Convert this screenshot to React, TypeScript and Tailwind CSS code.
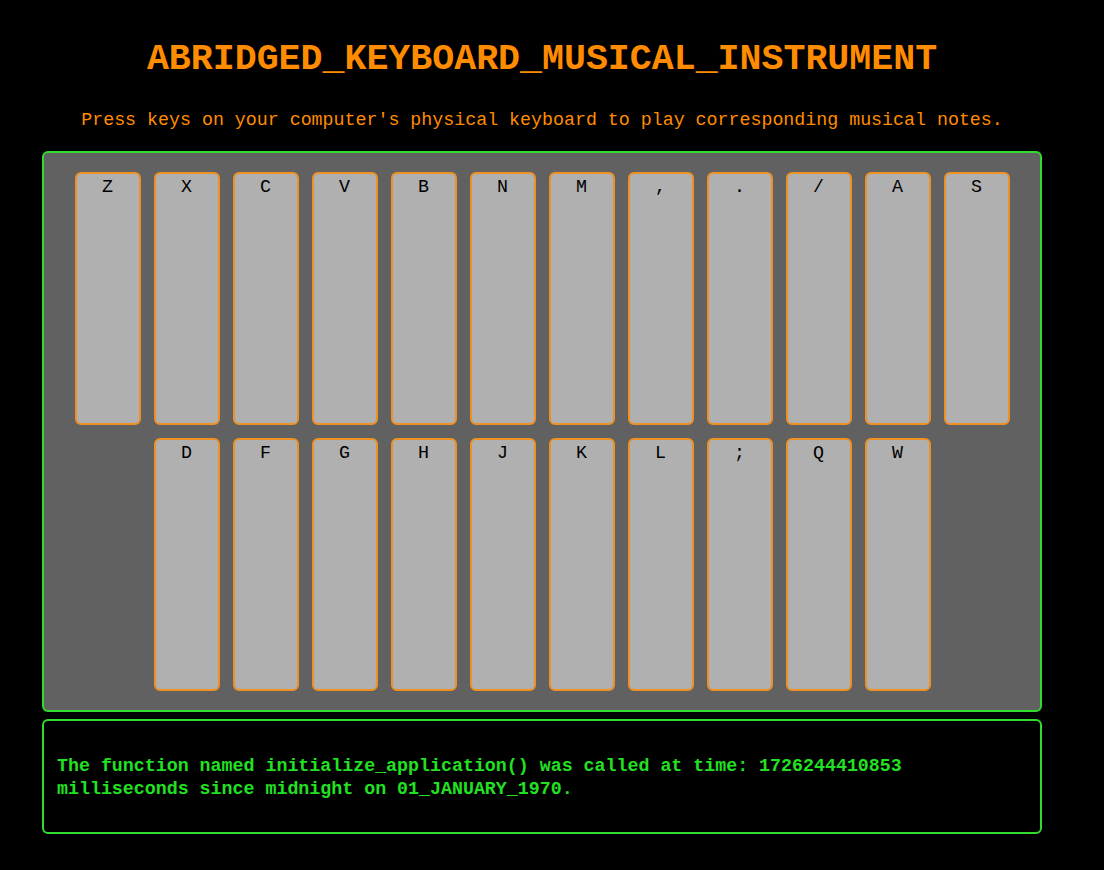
const topRow = ["Z", "X", "C", "V", "B", "N", "M", ",", ".", "/", "A", "S"];
const bottomRow = ["D", "F", "G", "H", "J", "K", "L", ";", "Q", "W"];

const Key = ({ label }: { label: string }) => (
  <div className="w-[66px] h-[253px] bg-[#b0b0b0] border-2 border-[#ee9022] rounded-[6px] flex justify-center pt-[1px] text-[18.3px] leading-[24px] text-black">
    {label}
  </div>
);

const App = () => {
  return (
    <div
      className="min-h-[870px] w-full bg-black pl-[42px] pt-[38px]"
      style={{ fontFamily: '"Liberation Mono", "DejaVu Sans Mono", monospace' }}
    >
      <div className="w-[1000px]">
        <h1 className="text-center text-[36.6px] leading-[44px] font-bold text-[#ff8c00]">
          ABRIDGED_KEYBOARD_MUSICAL_INSTRUMENT
        </h1>
        <p className="mt-[26px] text-center text-[18.3px] leading-[24px] text-[#ff8c00]">
          Press keys on your computer's physical keyboard to play corresponding musical notes.
        </p>

        <div className="mt-[19px] bg-[#616161] border-2 border-[#2fdc2f] rounded-[6px] py-[19px] px-[19px] flex flex-col gap-[13px]">
          <div className="flex justify-center gap-[13px]">
            {topRow.map((k) => (
              <Key key={k} label={k} />
            ))}
          </div>
          <div className="flex justify-center gap-[13px]">
            {bottomRow.map((k) => (
              <Key key={k} label={k} />
            ))}
          </div>
        </div>

        <div className="mt-[7px] h-[115px] border-2 border-[#2fdc2f] rounded-[6px] px-[13px] pt-[34px]">
          <p className="text-[18.3px] leading-[23px] font-bold text-[#22e022]">
            The function named initialize_application() was called at time: 1726244410853
            <br />
            milliseconds since midnight on 01_JANUARY_1970.
          </p>
        </div>
      </div>
    </div>
  );
};

export default App;
